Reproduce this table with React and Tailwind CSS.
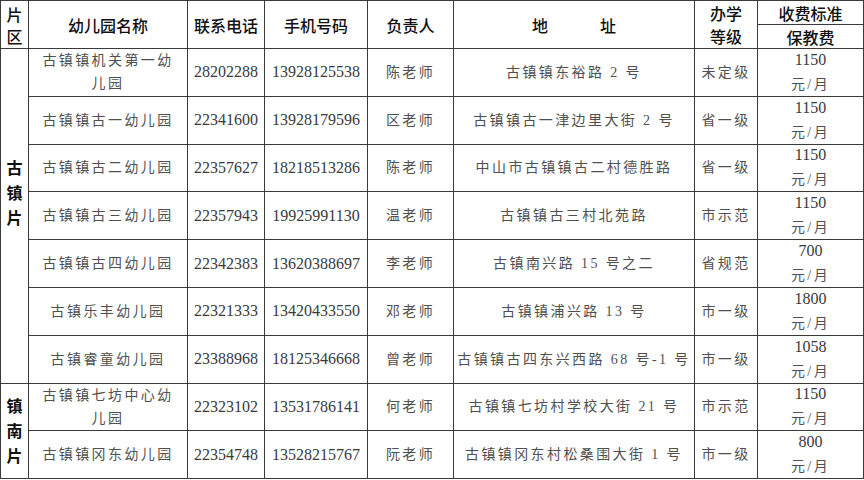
const rows = [
  ['古镇镇机关第一幼', '儿园', '28202288', '13928125538', '陈老师', '古镇镇东裕路 2 号', '未定级', '1150'],
  ['古镇镇古一幼儿园', null, '22341600', '13928179596', '区老师', '古镇镇古一津边里大街 2 号', '省一级', '1150'],
  ['古镇镇古二幼儿园', null, '22357627', '18218513286', '陈老师', '中山市古镇镇古二村德胜路', '省一级', '1150'],
  ['古镇镇古三幼儿园', null, '22357943', '19925991130', '温老师', '古镇镇古三村北苑路', '市示范', '1150'],
  ['古镇镇古四幼儿园', null, '22342383', '13620388697', '李老师', '古镇南兴路 15 号之二', '省规范', '700'],
  ['古镇乐丰幼儿园', null, '22321333', '13420433550', '邓老师', '古镇镇浦兴路 13 号', '市一级', '1800'],
  ['古镇睿童幼儿园', null, '23388968', '18125346668', '曾老师', '古镇镇古四东兴西路 68 号-1 号', '市一级', '1058'],
  ['古镇镇七坊中心幼', '儿园', '22323102', '13531786141', '何老师', '古镇镇七坊村学校大街 21 号', '市示范', '1150'],
  ['古镇镇冈东幼儿园', null, '22354748', '13528215767', '阮老师', '古镇镇冈东村松桑围大街 1 号', '市一级', '800'],
]

const cell = 'border border-[#3a3a3a] text-center align-middle p-0'
const head = 'text-[16px] text-[#111] font-medium'
const zh = 'text-[14px] tracking-[2.4px] text-[#505050]'
const num = 'text-[16px] text-[#3a3a3a]'

const App = () => {
  return (
    <div
      className="w-[864px] h-[480px] bg-white overflow-hidden"
      style={{ fontFamily: '"Liberation Serif", "Noto Sans CJK SC", serif' }}
    >
      <table className="w-[863px] table-fixed border-collapse">
        <colgroup>
          <col className="w-[28px]" />
          <col className="w-[159px]" />
          <col className="w-[77px]" />
          <col className="w-[103px]" />
          <col className="w-[86px]" />
          <col className="w-[241px]" />
          <col className="w-[63px]" />
          <col className="w-[106px]" />
        </colgroup>
        <thead style={{ fontFamily: '"Noto Sans CJK SC", sans-serif' }}>
          <tr className="h-[24px]">
            <td rowSpan={2} className={`${cell} ${head} leading-[22px] font-bold`}>
              片<br />区
            </td>
            <td rowSpan={2} className={`${cell} ${head}`}>幼儿园名称</td>
            <td rowSpan={2} className={`${cell} ${head}`}>联系电话</td>
            <td rowSpan={2} className={`${cell} ${head}`}>手机号码</td>
            <td rowSpan={2} className={`${cell} ${head}`}>负责人</td>
            <td rowSpan={2} className={`${cell} ${head}`}>
              <span>地</span>
              <span className="ml-[52px]">址</span>
            </td>
            <td rowSpan={2} className={`${cell} ${head} leading-[23px]`}>
              办学<br />等级
            </td>
            <td className={`${cell} ${head} leading-[22px]`}>收费标准</td>
          </tr>
          <tr className="h-[24px]">
            <td className={`${cell} ${head} leading-[22px]`}>保教费</td>
          </tr>
        </thead>
        <tbody>
          {rows.map((r, i) => (
            <tr key={i} className="h-[47.8px]">
              {i === 0 && (
                <td
                  rowSpan={7}
                  className={`${cell} text-[16px] font-bold text-[#111] leading-[25px] pb-[46px]`}
                  style={{ fontFamily: '"Noto Sans CJK SC", sans-serif' }}
                >
                  古<br />镇<br />片
                </td>
              )}
              {i === 7 && (
                <td
                  rowSpan={2}
                  className={`${cell} text-[16px] font-bold text-[#111] leading-[25px]`}
                  style={{ fontFamily: '"Noto Sans CJK SC", sans-serif' }}
                >
                  镇<br />南<br />片
                </td>
              )}
              <td className={`${cell} ${zh} leading-[23px]`}>
                {r[0]}
                {r[1] && (
                  <>
                    <br />
                    {r[1]}
                  </>
                )}
              </td>
              <td className={`${cell} ${num}`}>{r[2]}</td>
              <td className={`${cell} ${num}`}>{r[3]}</td>
              <td className={`${cell} ${zh}`}>{r[4]}</td>
              <td className={`${cell} ${zh} whitespace-nowrap`}>{r[5]}</td>
              <td className={`${cell} ${zh}`}>{r[6]}</td>
              <td className={cell}>
                <div className="flex flex-col items-center gap-[5px] leading-[20px]">
                  <div className={num}>{r[7]}</div>
                  <div className={zh}>元/月</div>
                </div>
              </td>
            </tr>
          ))}
        </tbody>
      </table>
    </div>
  )
}

export default App
